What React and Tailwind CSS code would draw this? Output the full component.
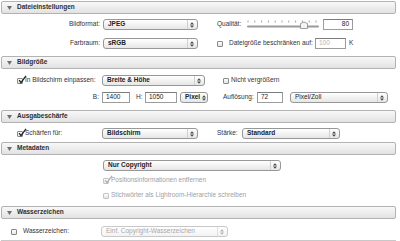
import React from "react";

function Header({ title }) {
  return (
    <div className="ml-[1px] h-[13px] w-[395px] flex items-center border border-[#b2b2b2] rounded-[2px] bg-gradient-to-b from-[#f8f8f8] to-[#e2e2e2]">
      <svg width="5" height="4" className="ml-[5px]">
        <path d="M0 0H5L2.5 4Z" fill="#6e6e6e" />
      </svg>
      <span className="ml-[5px] font-bold text-[#2e2e2e] leading-none">{title}</span>
    </div>
  );
}

function Arrows({ color = "#444" }) {
  return (
    <svg width="4" height="6" className="mr-[3px] shrink-0">
      <path d="M0 2.4L2 0.2L4 2.4Z" fill={color} />
      <path d="M0 3.6L2 5.8L4 3.6Z" fill={color} />
    </svg>
  );
}

function Select({ className, label, bold = true, disabled = false }) {
  return (
    <div
      className={
        "h-[11px] flex items-center border rounded-[3px] bg-gradient-to-b shrink-0 " +
        (disabled
          ? "border-[#c8c8c8] from-white to-[#f2f2f2] text-[#a8a8a8] "
          : "border-[#979797] from-white to-[#e6e6e6] text-[#222] ") +
        className
      }
    >
      <span className={"ml-[4px] flex-1 leading-none whitespace-nowrap " + (bold ? "font-bold" : "")}>{label}</span>
      <div className={"h-full w-[1px] mr-[2px] " + (disabled ? "bg-[#e0e0e0]" : "bg-[#d0d0d0]")} />
      <Arrows color={disabled ? "#b0b0b0" : "#4a4a4a"} />
    </div>
  );
}

function Input({ className, value, right = false, muted = false }) {
  return (
    <div
      className={
        "h-[11px] flex items-center bg-white border border-[#9c9c9c] border-t-[#7c7c7c] shrink-0 " +
        (right ? "justify-end pr-[3px] " : "pl-[3px] ") +
        (muted ? "text-[#b4b4b4] " : "text-[#222] ") +
        className
      }
    >
      <span className="leading-none">{value}</span>
    </div>
  );
}

function Check({ checked = false, disabled = false }) {
  return (
    <div
      className={
        "relative w-[6px] h-[6px] rounded-[1px] border shrink-0 bg-gradient-to-b from-white to-[#e4e4e4] " +
        (disabled ? "border-[#c4c4c4]" : "border-[#888]")
      }
    >
      {checked && (
        <svg width="9" height="9" className="absolute left-[0px] top-[-4px]">
          <path
            d="M1.2 5.2L3 7.6L8 0.8"
            stroke={disabled ? "#b0b0b0" : "#222"}
            strokeWidth="1.3"
            fill="none"
          />
        </svg>
      )}
    </div>
  );
}

function Slider() {
  const ticks = [];
  for (let i = 0; i < 11; i++) ticks.push(2 + i * 6.8);
  return (
    <svg width="76" height="11" className="shrink-0">
      {ticks.map((x, i) => (
        <line key={i} x1={x} x2={x} y1="1.5" y2="3.5" stroke="#8a8a8a" strokeWidth="0.8" />
      ))}
      <rect x="1" y="6.5" width="72" height="2" rx="1" fill="#9a9a9a" />
      <path d="M54.5 4.5L58 3L61.5 4.5V9.5H54.5Z" fill="#f4f4f4" stroke="#7a7a7a" strokeWidth="0.7" />
    </svg>
  );
}

export default function App() {
  return (
    <div
      className="w-[400px] h-[241px] bg-white text-[6.5px] text-[#333] overflow-hidden pt-[1px]"
      style={{ fontFamily: '"Liberation Sans", Arial, sans-serif' }}
    >
      <Header title="Dateieinstellungen" />
      {/* Dateieinstellungen */}
      <div className="pt-[5px] pb-[7px] flex flex-col gap-[8px]">
        <div className="h-[11px] flex items-center">
          <div className="w-[217px] flex items-center shrink-0">
            <span className="w-[100px] text-right leading-none">Bildformat:</span>
            <Select className="ml-[3px] w-[95px]" label="JPEG" />
          </div>
          <span className="w-[28px] leading-none">Qualität:</span>
          <div className="ml-[1px]"><Slider /></div>
          <Input className="ml-[1px] w-[30px]" value="80" right />
        </div>
        <div className="h-[11px] flex items-center">
          <div className="w-[217px] flex items-center shrink-0">
            <span className="w-[100px] text-right leading-none">Farbraum:</span>
            <Select className="ml-[3px] w-[95px]" label="sRGB" />
          </div>
          <Check />
          <span className="ml-[6px] w-[86px] leading-none whitespace-nowrap">Dateigröße beschränken auf:</span>
          <Input className="w-[31px]" value="100" muted />
          <span className="ml-[3px] leading-none">K</span>
        </div>
      </div>

      <Header title="Bildgröße" />
      <div className="pt-[6px] pb-[7px] flex flex-col gap-[6px]">
        <div className="h-[11px] flex items-center">
          <div className="w-[223px] flex items-center shrink-0">
            <div className="ml-[17px]"><Check checked /></div>
            <span className="ml-[2px] w-[77px] leading-none whitespace-nowrap">In Bildschirm einpassen:</span>
            <Select className="w-[103px]" label="Breite & Höhe" />
          </div>
          <Check />
          <span className="ml-[2px] leading-none">Nicht vergrößern</span>
        </div>
        <div className="h-[11px] flex items-center">
          <div className="w-[223px] flex items-center shrink-0">
            <span className="w-[100px] text-right leading-none pr-[1px]">B:</span>
            <Input className="ml-[2px] w-[28px]" value="1400" />
            <span className="ml-[6px] w-[9px] leading-none">H:</span>
            <Input className="w-[32px]" value="1050" />
            <Select className="ml-[3px] w-[28px]" label="Pixel" />
          </div>
          <span className="w-[34px] leading-none">Auflösung:</span>
          <Input className="w-[26px]" value="72" />
          <Select className="ml-[7px] w-[98px]" label="Pixel/Zoll" bold={false} />
        </div>
      </div>

      <Header title="Ausgabeschärfe" />
      <div className="pt-[5px] pb-[3px]">
        <div className="h-[11px] flex items-center">
          <div className="w-[217px] flex items-center shrink-0">
            <div className="ml-[17px]"><Check checked /></div>
            <span className="ml-[2px] w-[77px] leading-none">Schärfen für:</span>
            <Select className="w-[96px]" label="Bildschirm" />
          </div>
          <span className="w-[25px] leading-none">Stärke:</span>
          <Select className="w-[98px]" label="Standard" />
        </div>
      </div>

      <Header title="Metadaten" />
      <div className="pt-[5px] pb-[3px] pl-[103px] flex flex-col">
        <Select className="w-[178px]" label="Nur Copyright" />
        <div className="h-[15px] mt-[2px] flex items-center text-[#a0a0a0]">
          <Check checked disabled />
          <span className="ml-[2px] leading-none">Positionsinformationen entfernen</span>
        </div>
        <div className="h-[15px] flex items-center text-[#a0a0a0]">
          <Check disabled />
          <span className="ml-[2px] leading-none">Stichwörter als Lightroom-Hierarchie schreiben</span>
        </div>
      </div>

      <Header title="Wasserzeichen" />
      <div className="pt-[7px]">
        <div className="h-[11px] flex items-center">
          <div className="ml-[11px]"><Check /></div>
          <span className="ml-[6px] w-[78px] leading-none">Wasserzeichen:</span>
          <Select className="w-[127px]" label="Einf. Copyright-Wasserzeichen" bold={false} disabled />
        </div>
        <div className="mt-[3px] ml-[1px] w-[395px] h-[1px] bg-[#c8c8c8]" />
      </div>
    </div>
  );
}
